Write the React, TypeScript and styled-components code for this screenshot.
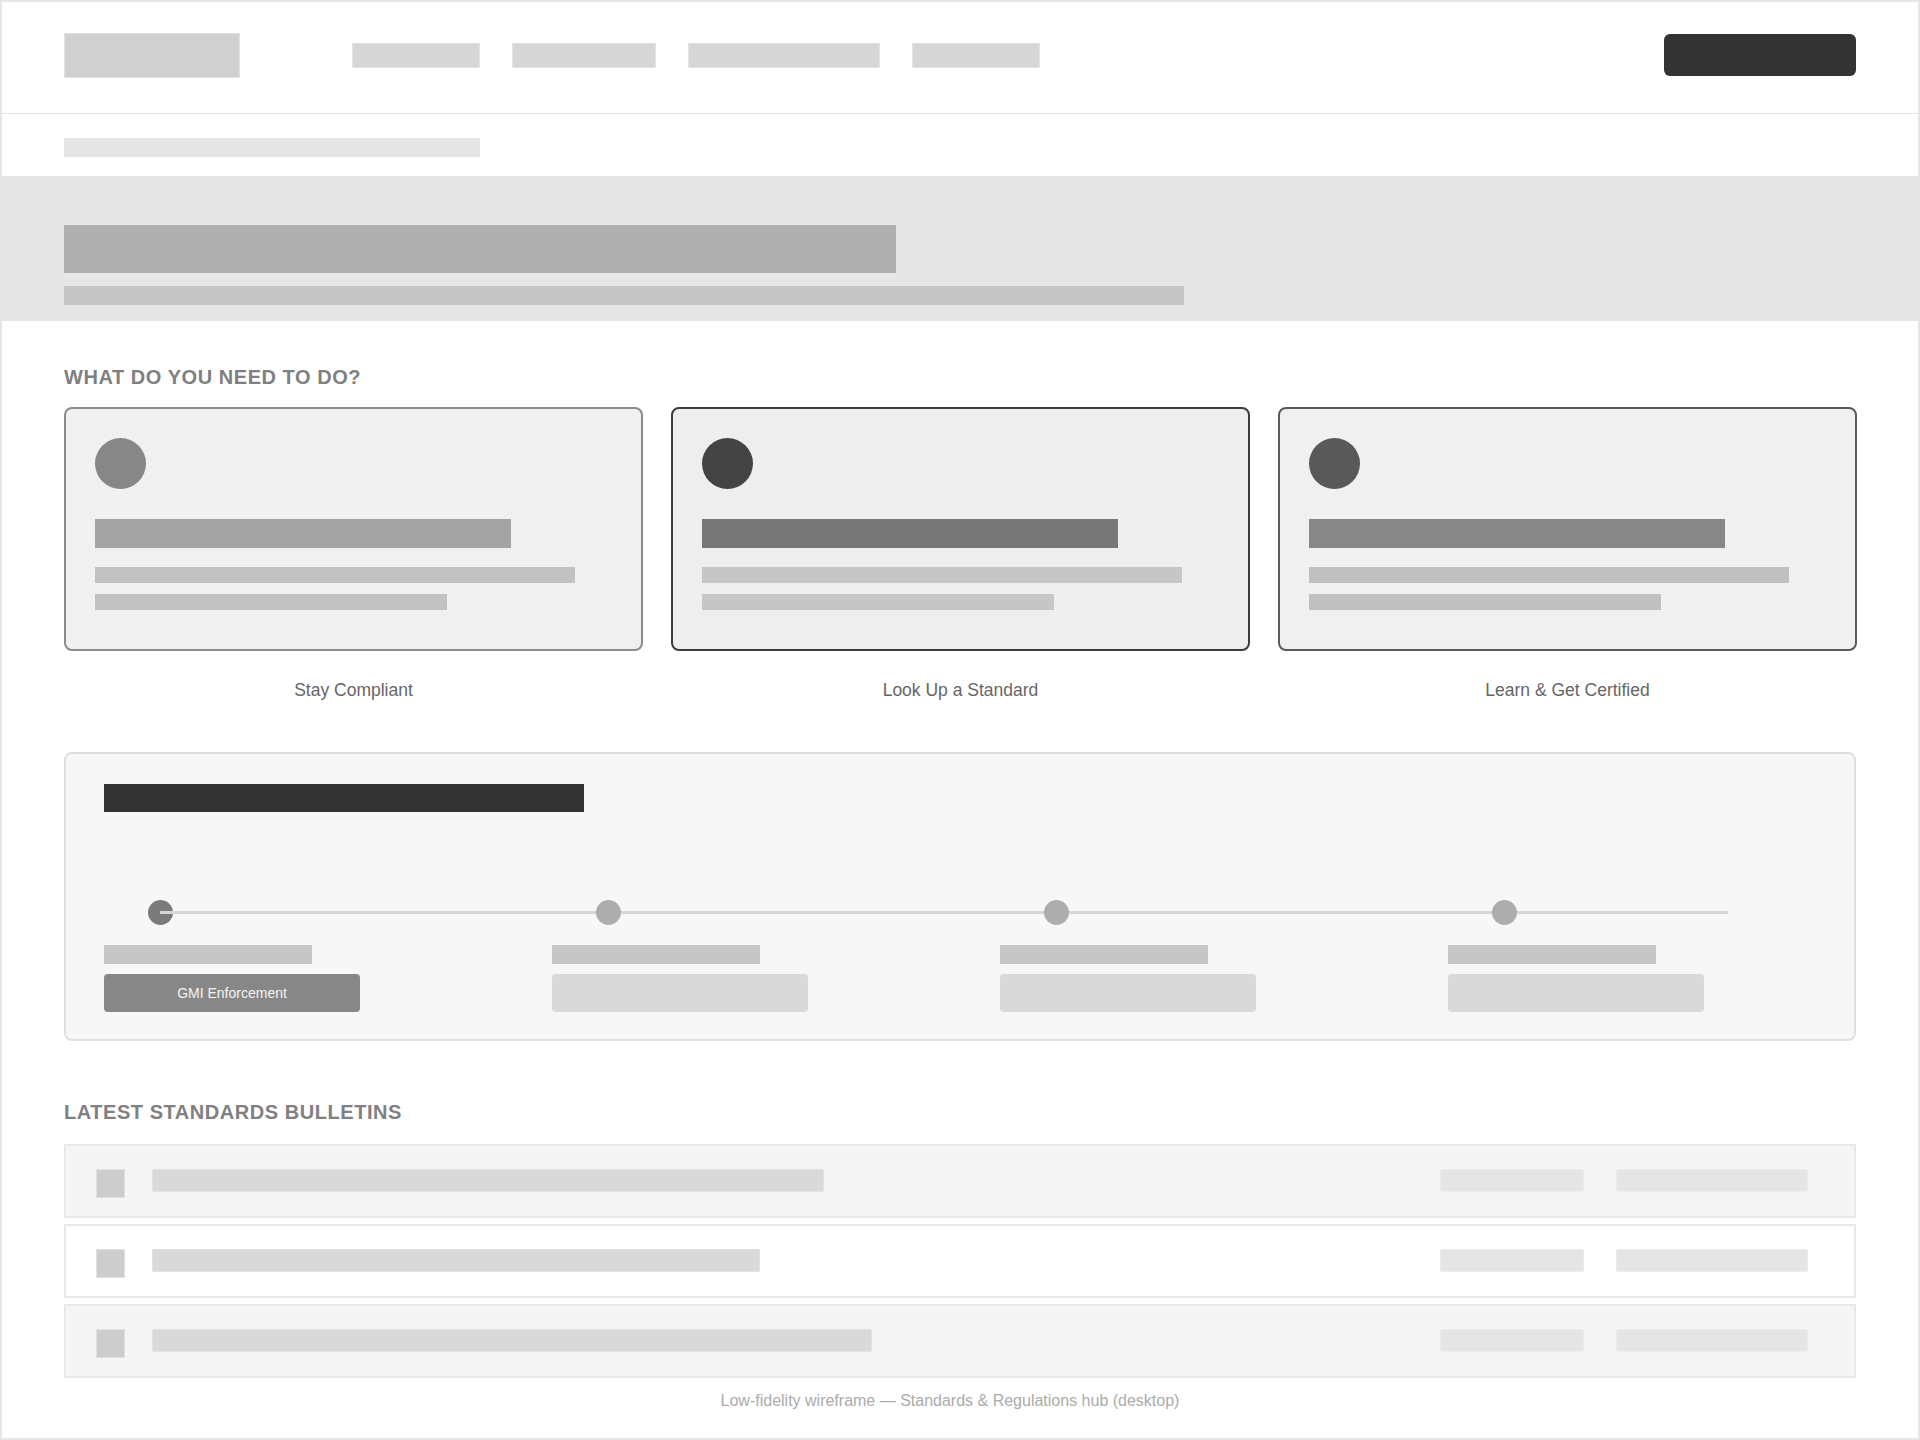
import React from "react";
import styled, { createGlobalStyle } from "styled-components";

const GlobalStyle = createGlobalStyle`
  html, body {
    margin: 0;
    padding: 0;
    background: #ffffff;
  }
  body {
    font-family: "Liberation Sans", Arial, sans-serif;
    color: #333333;
  }
  * { box-sizing: border-box; }
`;

const Frame = styled.div`
  width: 1920px;
  min-height: 1440px;
  border: 2px solid #e6e6e6;
  background: #ffffff;
  display: flex;
  flex-direction: column;
`;

/* ---------- top bar ---------- */
const Header = styled.header`
  height: 112px;
  border-bottom: 1px solid #e4e4e4;
  padding: 0 62px 5px;
  display: flex;
  align-items: center;
`;

const Logo = styled.div`
  width: 176px;
  height: 45px;
  background: #d0d0d0;
  border: 1px solid #e2e2e2;
  margin-right: 112px;
`;

const Nav = styled.nav`
  display: flex;
  gap: 32px;
`;

const NavItem = styled.div<{ $w: number }>`
  width: ${(p) => p.$w}px;
  height: 25px;
  background: #d6d6d6;
  border: 1px solid #e2e2e2;
`;

const CtaButton = styled.div`
  margin-left: auto;
  width: 192px;
  height: 42px;
  border-radius: 6px;
  background: #333333;
`;

/* ---------- breadcrumb ---------- */
const Crumbs = styled.div`
  height: 63px;
  padding: 24px 62px 0;
  border-bottom: 1px solid #e4e4e4;
`;

const CrumbBar = styled.div`
  width: 416px;
  height: 19px;
  background: #e6e6e6;
`;

/* ---------- hero ---------- */
const Hero = styled.section`
  height: 144px;
  background: #e6e6e6;
  padding: 48px 62px 0;
`;

const HeroTitle = styled.div`
  width: 832px;
  height: 48px;
  background: #afafaf;
`;

const HeroSub = styled.div`
  width: 1120px;
  height: 19px;
  margin-top: 13px;
  background: #c6c6c6;
`;

/* ---------- main ---------- */
const Main = styled.main`
  padding: 0 62px;
  display: flex;
  flex-direction: column;
`;

const SectionHeading = styled.h2<{ $top: number; $bottom: number }>`
  margin: ${(p) => p.$top}px 0 ${(p) => p.$bottom}px;
  font-family: "Liberation Sans", Arial, sans-serif;
  font-size: 20px;
  line-height: 23px;
  font-weight: 700;
  color: #808080;
  letter-spacing: 0.55px;
`;

const TaskGrid = styled.div`
  display: grid;
  grid-template-columns: repeat(3, 579px);
  gap: 28px;
`;

const TaskColumn = styled.div`
  display: flex;
  flex-direction: column;
  align-items: stretch;
`;

type Tone = { border: string; bg: string; dot: string; bar: string; line: string };

const tones: Tone[] = [
  { border: "#8c8c8c", bg: "#f0f0f0", dot: "#878787", bar: "#a4a4a4", line: "#c2c2c2" },
  { border: "#3c3c3c", bg: "#eeeeee", dot: "#444444", bar: "#777777", line: "#c6c6c6" },
  { border: "#5a5a5a", bg: "#f0f0f0", dot: "#595959", bar: "#878787", line: "#c0c0c0" },
];

const TaskCard = styled.div<{ $tone: Tone }>`
  height: 244px;
  border: 2px solid ${(p) => p.$tone.border};
  border-radius: 8px;
  background: ${(p) => p.$tone.bg};
  padding: 29px 29px 0;
  display: flex;
  flex-direction: column;
  align-items: flex-start;
`;

const TaskIcon = styled.div<{ $color: string }>`
  width: 51px;
  height: 51px;
  border-radius: 50%;
  background: ${(p) => p.$color};
`;

const TaskTitle = styled.div<{ $color: string }>`
  width: 416px;
  height: 29px;
  margin-top: 30px;
  background: ${(p) => p.$color};
`;

const TaskLine = styled.div<{ $color: string; $w: number; $gap: number }>`
  width: ${(p) => p.$w}px;
  height: 16px;
  margin-top: ${(p) => p.$gap}px;
  background: ${(p) => p.$color};
`;

const TaskCaption = styled.div`
  margin-top: 29px;
  text-align: center;
  font-size: 17.5px;
  line-height: 20px;
  color: #666666;
`;

/* ---------- process panel ---------- */
const ProcessPanel = styled.section`
  margin-top: 52px;
  border: 2px solid #dedede;
  border-radius: 8px;
  background: #f7f7f7;
  padding: 30px 38px 27px;
`;

const ProcessTitle = styled.div`
  width: 480px;
  height: 28px;
  background: #333333;
`;

const Timeline = styled.div`
  position: relative;
  margin-top: 88px;
  display: grid;
  grid-template-columns: repeat(4, 1fr);
  column-gap: 80px;
`;

const TimelineTrack = styled.div`
  position: absolute;
  top: 11px;
  left: 56px;
  right: 88px;
  height: 3px;
  background: #d6d6d6;
  z-index: 1;
`;

const Step = styled.div`
  display: flex;
  flex-direction: column;
  align-items: flex-start;
`;

const StepDot = styled.div<{ $active?: boolean }>`
  position: relative;
  z-index: ${(p) => (p.$active ? 0 : 2)};
  width: 25px;
  height: 25px;
  margin-left: 44px;
  border-radius: 50%;
  background: ${(p) => (p.$active ? "#7a7a7a" : "#adadad")};
`;

const StepLabel = styled.div`
  width: 208px;
  height: 19px;
  margin-top: 20px;
  background: #c6c6c6;
`;

const StepButton = styled.div<{ $active?: boolean }>`
  width: 256px;
  height: 38px;
  margin-top: 10px;
  border-radius: 4px;
  background: ${(p) => (p.$active ? "#878787" : "#d9d9d9")};
  color: #f4f4f4;
  font-size: 14px;
  display: flex;
  align-items: center;
  justify-content: center;
`;

/* ---------- bulletins ---------- */
const BulletinList = styled.div`
  display: flex;
  flex-direction: column;
  gap: 6px;
`;

const BulletinRow = styled.div<{ $shaded?: boolean }>`
  height: 74px;
  border: 2px solid #e8e8e8;
  background: ${(p) => (p.$shaded ? "#f5f5f5" : "#ffffff")};
  padding: 23px 46px 0 30px;
  display: flex;
  align-items: flex-start;
`;

const BulletinIcon = styled.div`
  width: 29px;
  height: 29px;
  background: #cdcdcd;
  border: 1px solid #e0e0e0;
`;

const BulletinTitle = styled.div<{ $w: number }>`
  width: ${(p) => p.$w}px;
  height: 23px;
  margin-left: 27px;
  background: #d9d9d9;
  border: 1px solid #e2e2e2;
`;

const BulletinMeta = styled.div`
  margin-left: auto;
  display: flex;
  gap: 32px;
`;

const MetaBar = styled.div<{ $w: number }>`
  width: ${(p) => p.$w}px;
  height: 23px;
  background: #e5e5e5;
  border: 1px solid #ececec;
`;

const FootNote = styled.footer`
  margin-top: 14px;
  padding: 0 20px 28px 0;
  text-align: center;
  font-size: 16px;
  line-height: 18px;
  color: #ababab;
`;

const tasks = [
  { caption: "Stay Compliant" },
  { caption: "Look Up a Standard" },
  { caption: "Learn & Get Certified" },
];

const steps = [
  { active: true, text: "GMI Enforcement" },
  { active: false, text: "" },
  { active: false, text: "" },
  { active: false, text: "" },
];

const bulletins = [
  { title: 672, shaded: true },
  { title: 608, shaded: false },
  { title: 720, shaded: true },
];

export default function App() {
  return (
    <>
      <GlobalStyle />
      <Frame>
        <Header>
          <Logo />
          <Nav>
            {[128, 144, 192, 128].map((w, i) => (
              <NavItem key={i} $w={w} />
            ))}
          </Nav>
          <CtaButton />
        </Header>

        <Crumbs>
          <CrumbBar />
        </Crumbs>

        <Hero>
          <HeroTitle />
          <HeroSub />
        </Hero>

        <Main>
          <SectionHeading $top={45} $bottom={18}>
            WHAT DO YOU NEED TO DO?
          </SectionHeading>
          <TaskGrid>
            {tasks.map((t, i) => {
              const tone = tones[i];
              return (
                <TaskColumn key={t.caption}>
                  <TaskCard $tone={tone}>
                    <TaskIcon $color={tone.dot} />
                    <TaskTitle $color={tone.bar} />
                    <TaskLine $color={tone.line} $w={480} $gap={19} />
                    <TaskLine $color={tone.line} $w={352} $gap={11} />
                  </TaskCard>
                  <TaskCaption>{t.caption}</TaskCaption>
                </TaskColumn>
              );
            })}
          </TaskGrid>

          <ProcessPanel>
            <ProcessTitle />
            <Timeline>
              <TimelineTrack />
              {steps.map((s, i) => (
                <Step key={i}>
                  <StepDot $active={s.active} />
                  <StepLabel />
                  <StepButton $active={s.active}>{s.text}</StepButton>
                </Step>
              ))}
            </Timeline>
          </ProcessPanel>

          <SectionHeading $top={60} $bottom={20}>
            LATEST STANDARDS BULLETINS
          </SectionHeading>
          <BulletinList>
            {bulletins.map((b, i) => (
              <BulletinRow key={i} $shaded={b.shaded}>
                <BulletinIcon />
                <BulletinTitle $w={b.title} />
                <BulletinMeta>
                  <MetaBar $w={144} />
                  <MetaBar $w={192} />
                </BulletinMeta>
              </BulletinRow>
            ))}
          </BulletinList>

          <FootNote>Low-fidelity wireframe — Standards &amp; Regulations hub (desktop)</FootNote>
        </Main>
      </Frame>
    </>
  );
}
